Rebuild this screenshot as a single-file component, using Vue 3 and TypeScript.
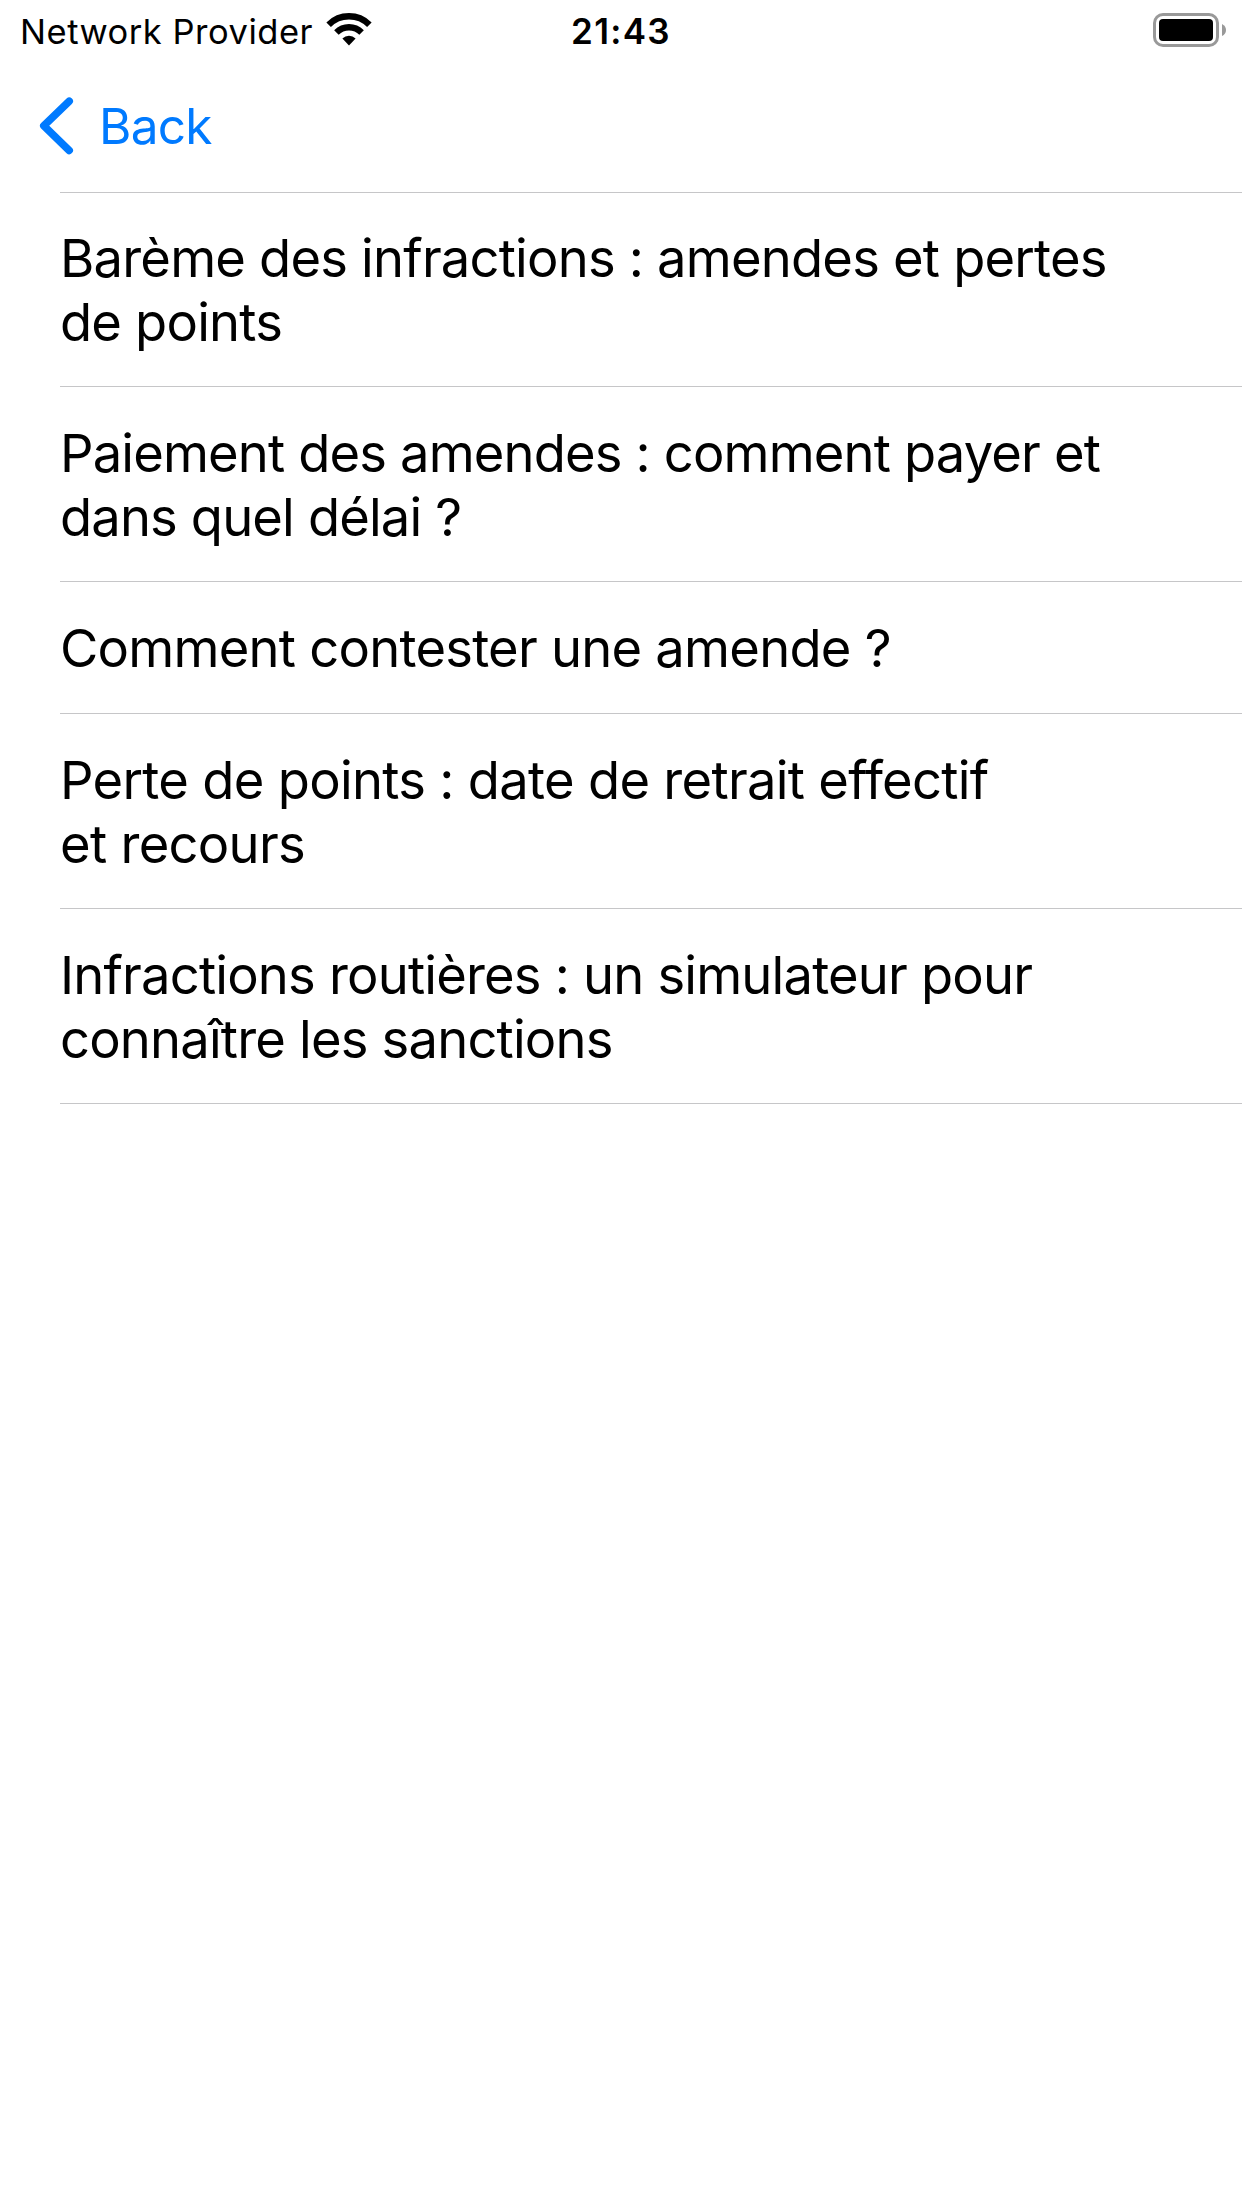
<script setup lang="ts">
interface Item {
  lines: string[]
  tracking: number
}

const items: Item[] = [
  { lines: ['Barème des infractions : amendes et pertes', 'de points'], tracking: -0.8 },
  { lines: ['Paiement des amendes : comment payer et', 'dans quel délai ?'], tracking: -0.85 },
  { lines: ['Comment contester une amende ?'], tracking: -0.76 },
  { lines: ['Perte de points : date de retrait effectif', 'et recours'], tracking: -0.7 },
  { lines: ['Infractions routières : un simulateur pour', 'connaître les sanctions'], tracking: -0.81 },
]
</script>

<template>
  <div class="screen">
    <header class="status">
      <div class="carrier">
        <span class="provider">Network Provider</span>
        <svg class="wifi" width="46" height="34" viewBox="0 0 46 34">
          <path d="M2.64 12.64 A28.8 28.8 0 0 1 43.36 12.64" fill="none" stroke="#000" stroke-width="6.4" />
          <path d="M10.41 20.41 A17.8 17.8 0 0 1 35.59 20.41" fill="none" stroke="#000" stroke-width="6.4" />
          <path d="M23 33.6 L16.4 26.6 A9.3 9.3 0 0 1 29.6 26.6 Z" />
        </svg>
      </div>
      <time class="time">21:43</time>
      <svg class="battery" width="73" height="34" viewBox="0 0 73 34">
        <rect x="1.5" y="1.5" width="63" height="31" rx="8.5" fill="none" stroke="#999" stroke-width="3" />
        <rect x="6" y="6" width="54" height="22" rx="4" />
        <path d="M69 11 Q73 13 73 17 Q73 21 69 23 Z" fill="#999" />
      </svg>
    </header>
    <nav class="nav">
      <svg class="chevron" width="36" height="60" viewBox="0 0 36 60">
        <path d="M31.2 5.2 L5.8 29.8 L31.2 54.4" fill="none" stroke="#007aff" stroke-width="7.6" stroke-linecap="round" stroke-linejoin="round" />
      </svg>
      <span class="back">Back</span>
    </nav>
    <ul class="list">
      <li
        v-for="(item, i) in items"
        :key="i"
        class="row"
        :class="{ single: item.lines.length === 1 }"
        :style="{ letterSpacing: item.tracking + 'px' }"
      >
        <div v-for="line in item.lines" :key="line">{{ line }}</div>
      </li>
    </ul>
  </div>
</template>

<style scoped>
.screen {
  width: 1242px;
  height: 2208px;
  background: #fff;
  color: #000;
  font-family: Inter, sans-serif;
  overflow: hidden;
}
.status {
  height: 60px;
  display: grid;
  grid-template-columns: 1fr auto 1fr;
  align-items: start;
  padding: 0 16px 0 16px;
  box-sizing: border-box;
}
.carrier {
  display: flex;
  align-items: flex-start;
  padding-left: 4px;
}
.provider {
  width: 306px;
  font-size: 34.5px;
  line-height: 63px;
  letter-spacing: 0.52px;
  white-space: nowrap;
}
.wifi {
  margin-top: 12px;
}
.time {
  font-size: 35px;
  line-height: 62px;
  font-weight: 600;
  letter-spacing: 1.3px;
}
.battery {
  justify-self: end;
  margin-top: 13px;
}
.nav {
  height: 132px;
  display: flex;
  align-items: center;
  padding-left: 38px;
  gap: 25px;
  box-sizing: border-box;
}
.back {
  font-size: 49.5px;
  letter-spacing: -0.7px;
  color: #007aff;
}
.list {
  list-style: none;
  margin: 0 0 0 60px;
  padding: 0;
  border-top: 1px solid #c6c6c8;
}
.row {
  padding: 34px 0 32px;
  border-bottom: 1px solid #c6c6c8;
  font-size: 52.5px;
  line-height: 64px;
  white-space: nowrap;
}
.row:first-child {
  padding-top: 33px;
}
.row.single {
  padding-bottom: 33px;
}
</style>
